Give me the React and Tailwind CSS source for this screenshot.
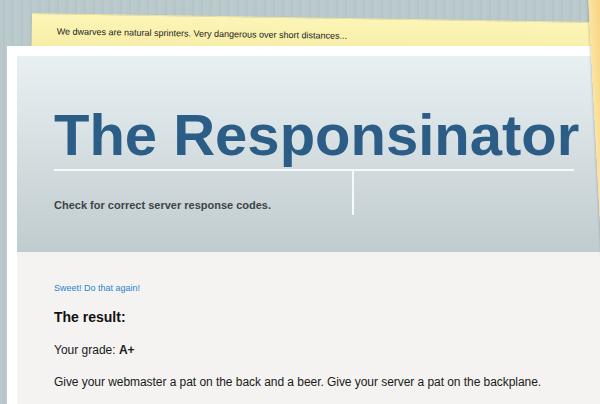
export default function App() {
  return (
    <div
      className="relative w-[600px] h-[404px] overflow-hidden bg-[#b8c7ca] bg-[repeating-linear-gradient(90deg,#b9c8cb_0px,#b9c8cb_3px,#b5c4c7_3px,#b5c4c7_5px,#bbcacd_5px,#bbcacd_9px)]"
      style={{ fontFamily: '"Liberation Sans", Arial, sans-serif' }}
    >
      {/* yellow sticky bar behind panel */}
      <div className="absolute left-[32px] top-[13px] w-[580px] h-[50px] origin-top-left rotate-[0.9deg] bg-gradient-to-b from-[#fcf5b6] to-[#f3e9a0] border-t border-[#e9e2a4] shadow-[0_1px_2px_rgba(0,0,0,0.15)]">
        <div className="pl-[25px] pt-[12px] text-[9px] leading-[11px] text-[#1c1c1c]">
          We dwarves are natural sprinters. Very dangerous over short distances...
        </div>
      </div>

      {/* main white panel */}
      <div className="relative ml-[7px] mt-[46px] w-[620px] bg-white pl-[10px] pt-[10px]">
        <div className="h-[196px] bg-gradient-to-b from-[#e8f0f2] to-[#c1ccd0] pl-[37px] pt-[50px]">
          <h1 className="text-[58px] leading-[58px] font-bold text-[#2b5d87] whitespace-nowrap">
            The Responsinator
          </h1>
          <div className="mt-[5px] w-[520px] h-[2px] bg-[#f7fafb]" />
          <div className="flex">
            <div className="w-[298px] pt-[27px] text-[11px] leading-[14px] font-bold text-[#3e4446]">
              Check for correct server response codes.
            </div>
            <div className="w-[2px] h-[44px] bg-[#f7fafb]" />
          </div>
        </div>
        <div className="h-[200px] bg-[#f4f3f1] pl-[37px] pt-[31px] text-[#1a1a1a]">
          <div className="text-[9px] leading-[11px] text-[#2a84cf]">Sweet! Do that again!</div>
          <div className="mt-[15px] text-[14px] leading-[17px] font-bold text-[#111]">The result:</div>
          <div className="mt-[17px] text-[12px] leading-[15px]">
            Your grade: <span className="font-bold">A+</span>
          </div>
          <div className="mt-[17px] text-[12px] leading-[15px] tracking-[-0.05px] whitespace-nowrap">
            Give your webmaster a pat on the back and a beer. Give your server a pat on the backplane.
          </div>
        </div>
      </div>

      {/* orange sticky on right edge */}
      <div className="absolute left-[588px] top-[-4px] w-[40px] h-[260px] origin-top-left rotate-[-3deg] bg-gradient-to-r from-[#fbe4a2] via-[#f7c965] to-[#f3bb52] shadow-[-1px_0_2px_rgba(0,0,0,0.15)]" />
    </div>
  );
}
